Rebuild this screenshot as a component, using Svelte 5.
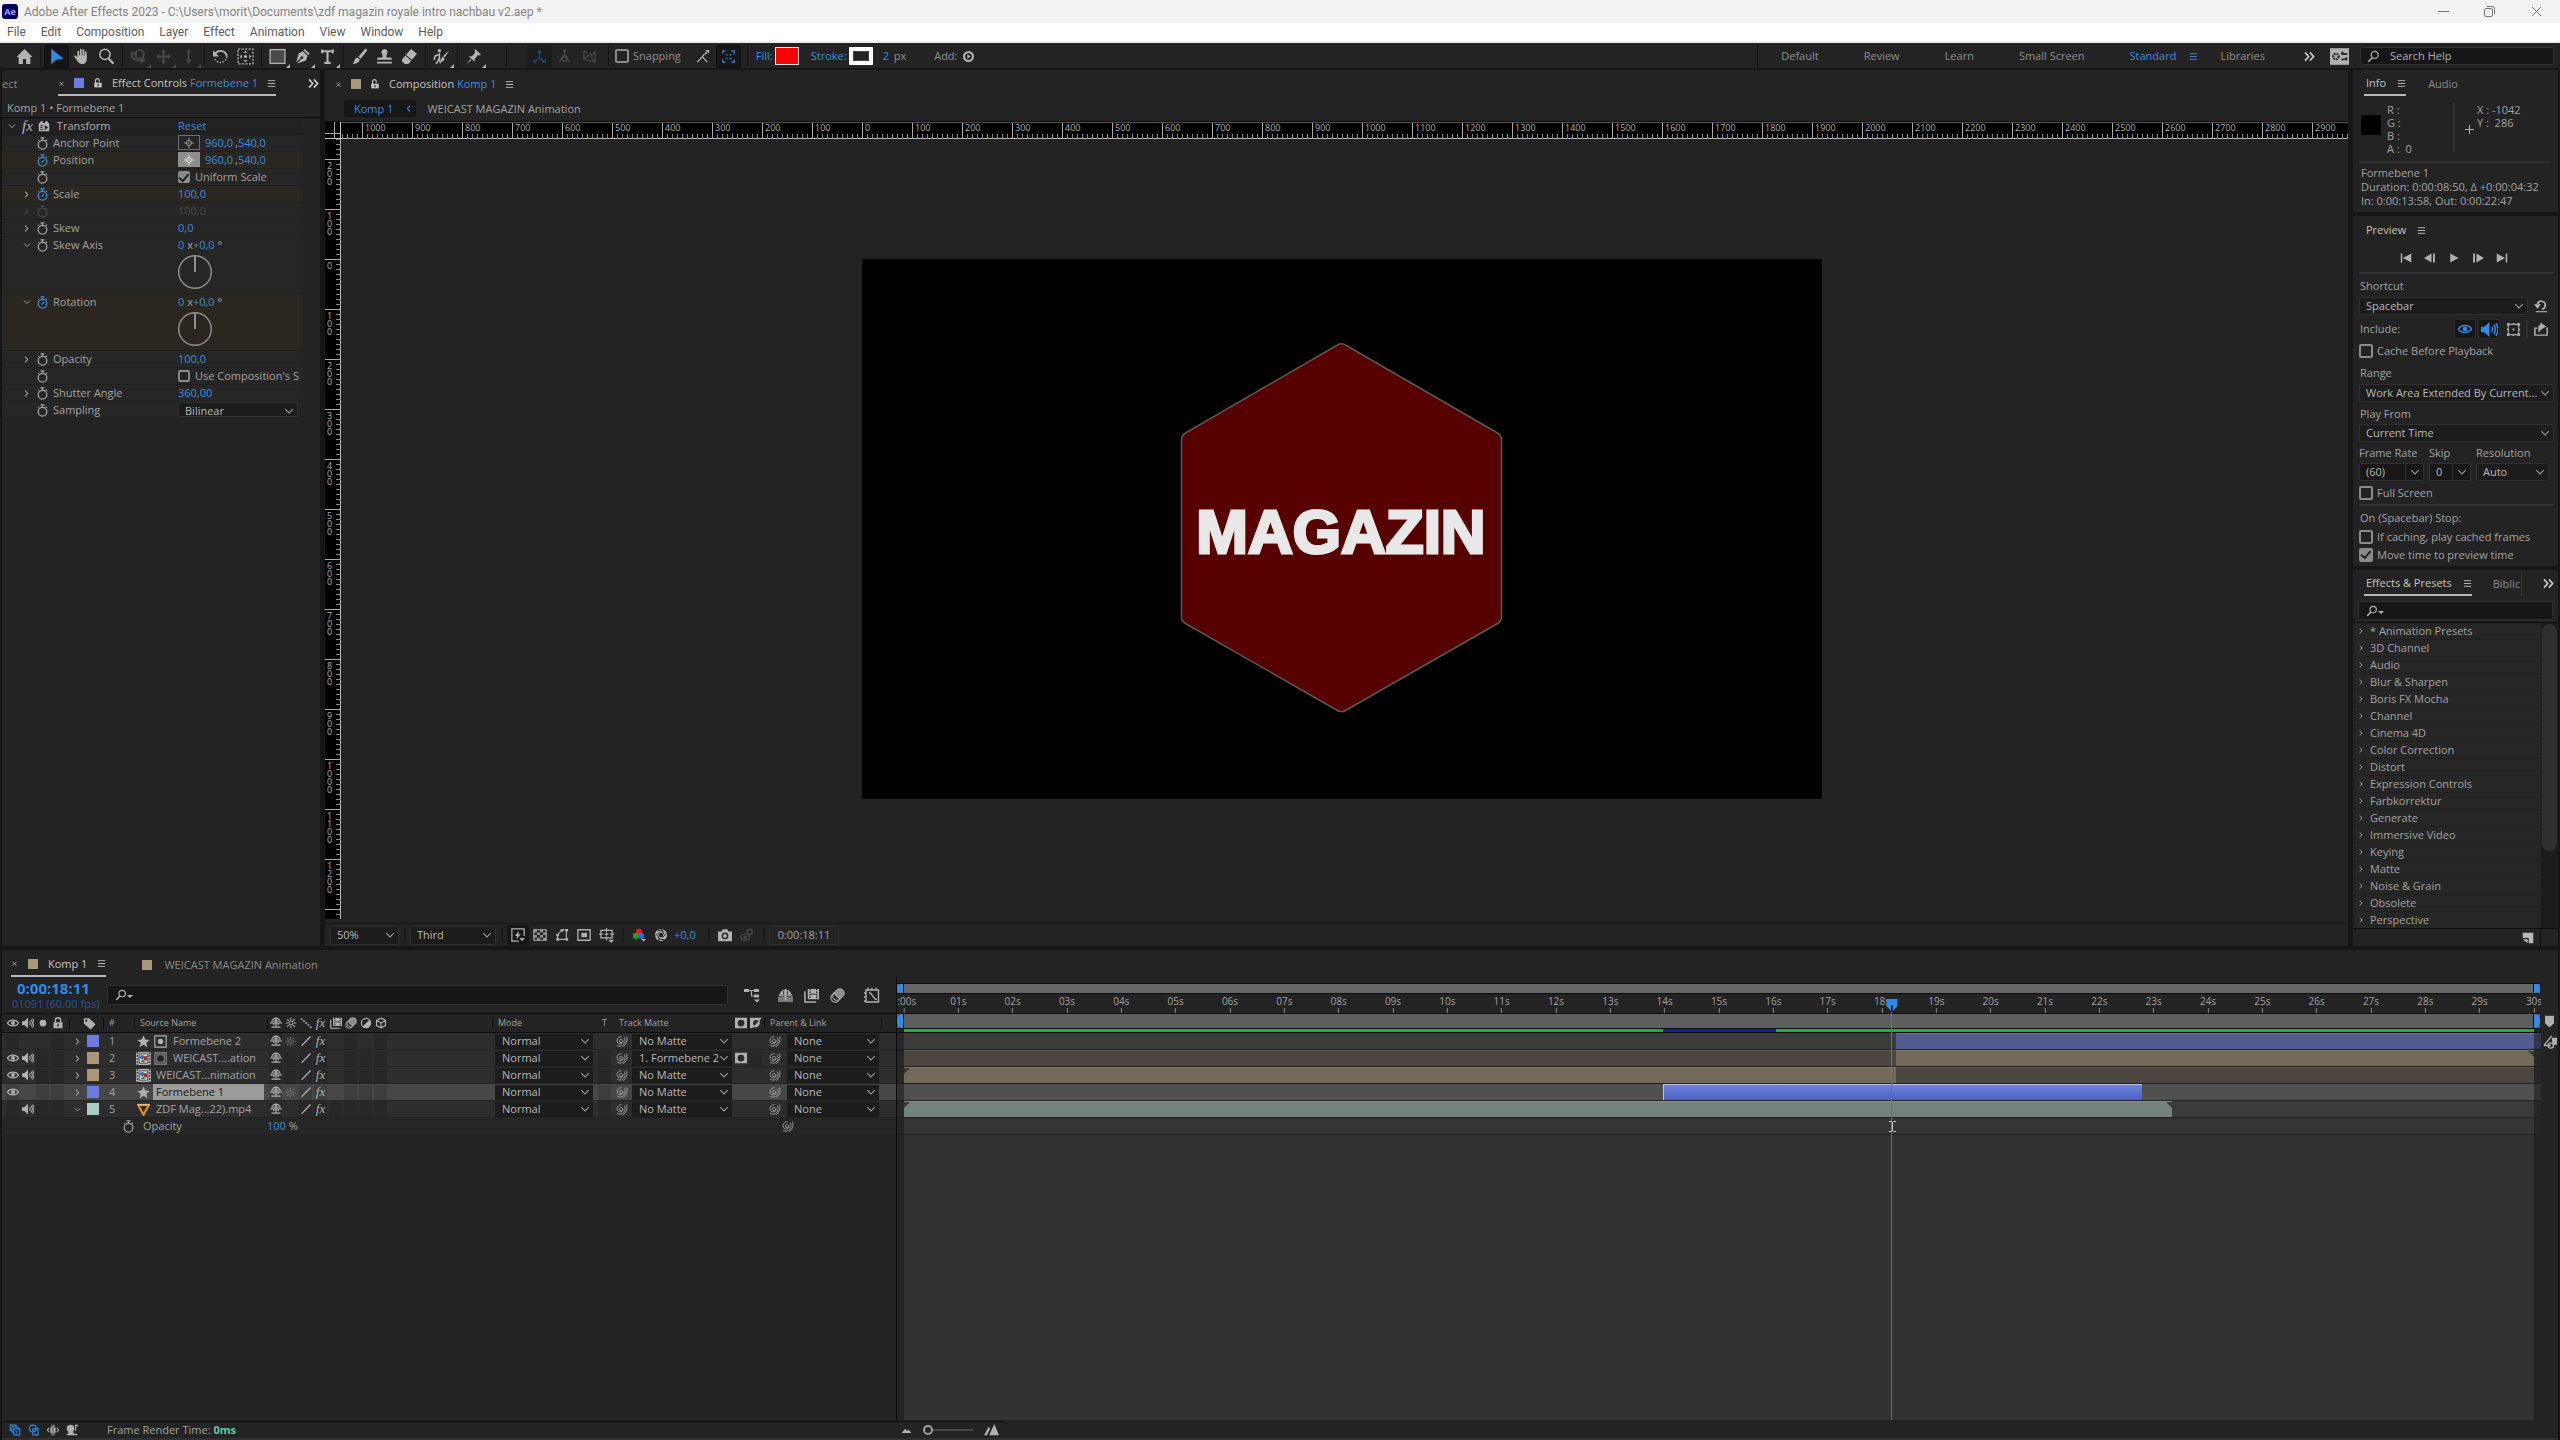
<script>
  const menus = ['File', 'Edit', 'Composition', 'Layer', 'Effect', 'Animation', 'View', 'Window', 'Help'];

  const toolGroups = [
    [{ icon: 'arrow', label: 'Selection', on: true }, { icon: 'hand', label: 'Hand' }, { icon: 'zoom', label: 'Zoom' }],
    [{ icon: 'orbit', label: 'Orbit', dim: true, more: true }, { icon: 'pan', label: 'Pan', dim: true, more: true }, { icon: 'dolly', label: 'Dolly', dim: true, more: true }],
    [{ icon: 'rotate', label: 'Rotate' }, { icon: 'behind', label: 'Pan Behind' }],
    [{ icon: 'rect', label: 'Rectangle', more: true }, { icon: 'pen', label: 'Pen', more: true }, { icon: 'type', label: 'Type', more: true }],
    [{ icon: 'brush', label: 'Brush' }, { icon: 'stamp', label: 'Clone Stamp' }, { icon: 'eraser', label: 'Eraser' }],
    [{ icon: 'roto', label: 'Roto Brush', more: true }],
    [{ icon: 'pin', label: 'Puppet Pin', more: true }]
  ];

  const workspaces = ['Default', 'Review', 'Learn', 'Small Screen', 'Standard', 'Libraries'];

  const props = [
    { name: 'Anchor Point', kind: 'point', value: ['960,0', '540,0'] },
    { name: 'Position', kind: 'point', value: ['960,0', '540,0'], key: true, picked: true },
    { name: '', kind: 'check', text: 'Uniform Scale', checked: true },
    { name: 'Scale', kind: 'num', value: '100,0', key: true, twirl: true },
    { name: '', kind: 'num', value: '100,0', dim: true, twirl: true },
    { name: 'Skew', kind: 'num', value: '0,0', twirl: true },
    { name: 'Skew Axis', kind: 'dial', open: true },
    { name: 'Rotation', kind: 'dial', open: true, key: true },
    { name: 'Opacity', kind: 'num', value: '100,0', twirl: true },
    { name: '', kind: 'check', text: "Use Composition's S", checked: false },
    { name: 'Shutter Angle', kind: 'num', value: '360,00', twirl: true },
    { name: 'Sampling', kind: 'select', value: 'Bilinear' }
  ];

  const effects = [
    '* Animation Presets', '3D Channel', 'Audio', 'Blur & Sharpen', 'Boris FX Mocha', 'Channel',
    'Cinema 4D', 'Color Correction', 'Distort', 'Expression Controls', 'Farbkorrektur', 'Generate',
    'Immersive Video', 'Keying', 'Matte', 'Noise & Grain', 'Obsolete', 'Perspective'
  ];

  // wells: indexes of the switch cells that show an empty well
  const layers = [
    { id: 1, name: 'Formebene 2', color: '#6b7ee0', icons: ['star', 'matteon'], eye: false, audio: false, solo: false, sun: true, matte: 'No Matte', wells: [5, 7], bars: [{ from: 18.25, to: 30.14, tone: 'violet' }] },
    { id: 2, name: 'WEICAST....ation', color: '#a89778', icons: ['comp', 'mattein'], eye: true, audio: true, solo: true, matte: '1. Formebene 2', invert: true, wells: [1, 5, 6, 7], bars: [{ from: 0, to: 18.25, tone: 'sanddim' }, { from: 18.25, to: 30, tone: 'sand cut-out' }] },
    { id: 3, name: 'WEICAST...nimation', color: '#a89778', icons: ['comp'], eye: true, audio: true, solo: true, matte: 'No Matte', wells: [1, 5, 6, 7], bars: [{ from: 0, to: 18.25, tone: 'sand cut-in' }, { from: 18.25, to: 30, tone: 'sanddim' }] },
    { id: 4, name: 'Formebene 1', color: '#6b7ee0', icons: ['star'], eye: true, audio: false, solo: true, sun: true, matte: 'No Matte', wells: [5, 6, 7], bars: [{ from: 13.97, to: 22.78, tone: 'picked' }] },
    { id: 5, name: 'ZDF Mag...22).mp4', color: '#a9cdc6', icons: ['movie'], eye: false, audio: true, solo: true, open: true, matte: 'No Matte', wells: [4, 5, 6, 7], bars: [{ from: 0, to: 23.33, tone: 'teal cut-in cut-out' }] }
  ];
  let selected = $state(4);

  const duration = 30;
  const now = 18 + 11 / 60;
  const pct = (s) => `${(s / duration) * 100}%`;
  const seconds = Array.from({ length: duration + 1 }, (_, s) => ({ s, label: s === 0 ? '0:00s' : `${String(s).padStart(2, '0')}s` }));

  // composition view: 50 % zoom, frame origin inside the viewer
  const origin = { x: 521, y: 120 };
  const hTicks = Array.from({ length: 40 }, (_, i) => (i - 10) * 100);
  const vTicks = Array.from({ length: 15 }, (_, i) => (i - 2) * 100);

  const icons = {
    home: '<path d="M8 1 0.5 8.4h2V15h4v-4.6h3V15h4V8.4h2z"/>',
    arrow: '<path d="M3 .5v15L7.5 11l7-1z"/>',
    hand: '<path d="M5 9V3.4M7.4 8V1.5M9.8 8V2M12 8.5V4" stroke="currentColor" stroke-width="1.7" stroke-linecap="round"/><path d="M4.1 7h8.800v3.5c0 2.5-1.3 4.5-4.3 4.5-2.5 0-3.7-1.3-4.6-3L1.200 8.200c-.4-1 .8-1.6 1.5-.8l1.4 1.700z"/>',
    zoom: '<g fill="none" stroke="currentColor"><circle cx="6.5" cy="6" r="4.8" stroke-width="1.4"/><path d="m10 9.800 4.600 5" stroke-width="2"/></g>',
    orbit: '<g fill="none" stroke="currentColor" stroke-width="1.8"><circle cx="9" cy="6" r="4"/><path d="M2 5c-2 5 4 8 11 6M1 4.500h4.500V8"/></g><path d="M10 8l5 3-5 4z"/>',
    pan: '<path d="M8 1 10.500 4H9v3h3V5.500L15 8l-3 2.500V9H9v3h1.500L8 15l-2.500-3H7V9H4v1.500L1 8l3-2.500V7h3V4H5.500z"/>',
    dolly: '<path d="M8 1l2 3H8.800v7H11l-3 4-3-4h2.200V4H6z"/>',
    rotate: '<path d="M3 5.500A6 6 0 0 1 14 8" fill="none" stroke="currentColor" stroke-width="1.8"/><path d="M1 2v6h5.500z"/><path d="M14 8a6 6 0 0 1-11.500 2" fill="none" stroke="currentColor" stroke-width="1.3" stroke-dasharray="1.3 1.5"/>',
    behind: '<rect x="1" y="1" width="14" height="14" fill="none" stroke="currentColor" stroke-width="1.2" stroke-dasharray="2 1.3"/><path d="M8 2.500l2 2H6zM8 13.500l2-2H6zM2.500 8l2-2v4zM13.500 8l-2-2v4z"/><circle cx="8" cy="8" r="1.5"/>',
    rect: '<rect x="1" y="1.5" width="14" height="13" fill="#4a4a4a" stroke="currentColor" stroke-width="1.2"/>',
    pen: '<path d="M10 1l5 4.500-1.500 1.200-4.700-4.500zM8.300 3l4.500 4.400-1.600 4.300L3 14.500l4-4.300a1.300 1.300 0 1 0-.8-.8L2 13.600 4.500 5z"/>',
    type: '<path d="M3 3h10M8 3v11M5 14h6M3 1.500V5M13 1.500V5" fill="none" stroke="currentColor" stroke-width="2"/>',
    brush: '<path d="M14.500 1c.8.8.5 1.500 0 2.200L9 10 7 8.200l6-7c.5-.6 1-.6 1.500-.2zM6.200 9l2 1.900c-.2 2.600-3 4.300-6.700 3.900 2-1 1.500-5.800 4.700-5.800z"/>',
    stamp: '<path d="M8 1a3 3 0 0 1 2.500 4.500C9.500 7 9.700 8.500 10 9h3.500c.8 0 1.500.6 1.500 2H1c0-1.400.7-2 1.500-2H6c.3-.5.5-2-.5-3.500A3 3 0 0 1 8 1zM1 13h14v1.500H1z"/>',
    eraser: '<path d="M9.500 1 15 5.500 7 15H3.500L1 12.500v-2z"/><path d="M4.500 7l6 5" stroke="#232323" stroke-width="1"/>',
    roto: '<circle cx="6" cy="2.5" r="1.6"/><path d="M6 5v5M6 6L2 7.500 1 11M6 9.500L3 15M6 9.500l1 5" fill="none" stroke="currentColor" stroke-width="1.5"/><path d="M15.500 2 11 9 9.500 7.500zM9 8l2 2c-.5 2-2 3-4 3 1-1 .5-3.500 2-5z"/>',
    pin: '<path d="M9.500 1l5.500 5-1.500 1-1-.3L9.300 10l-.2 3L3.500 8l3-.3 3-3.300L9 2zM5 10.500l1 1L1.500 15z"/>',
    axis: '<g fill="none" stroke="currentColor" stroke-width="1.3"><path d="M8 2v7.500L2 14M8 9.500l6 4.500M6 4l2-2.500L10 4M2 11v3h3M14 11v3h-3"/></g>',
    axisb: '<g fill="none" stroke="currentColor" stroke-width="1.3"><path d="M8 1v6.500L2 14M8 7.500l6 6.500M6.500 3 8 1l1.500 2"/><circle cx="8" cy="10" r="3"/></g>',
    axisc: '<path d="M2 2v9l12 3V3L9 8M2 2l4 2M14 14l-4-5M2 11l8-7" fill="none" stroke="currentColor" stroke-width="1.3"/>',
    snap: '<path d="M1.500 15 7 9l6 6M7 9l2.500-3" fill="none" stroke="currentColor" stroke-width="1.5"/><path d="M10.500 1H15v4.500zM9.500 5l2-2 1.500 1.500-2 2z"/>',
    snapbox: '<g fill="none" stroke="currentColor" stroke-width="1.5"><path d="M1 4.500V1h3.500M11.500 1H15v3.500M15 11.500V15h-3.500M4.500 15H1v-3.500"/><path d="M5 5l1.500 1.500M11 5 9.500 6.500M5 11l1.500-1.500M11 11 9.500 9.500"/></g>',
    addplay: '<circle cx="8" cy="8" r="5.5" fill="none" stroke="currentColor" stroke-width="2.6"/><path d="M6.500 5v6l4-3z"/>',
    chev: '<path d="M3 5.500 8 10.500l5-5" fill="none" stroke="currentColor" stroke-width="1.5"/>',
    chevr: '<path d="M5.500 3 10 8l-4.500 5" fill="none" stroke="currentColor" stroke-width="1.9"/>',
    dchev: '<path d="M2.500 3 7 8l-4.500 5M8.500 3 13 8l-4.500 5" fill="none" stroke="currentColor" stroke-width="2.2"/>',
    menu: '<path d="M1.500 3h13M1.500 8h13M1.500 13h13" stroke="currentColor" stroke-width="1.6"/>',
    x: '<path d="M3.500 4l9 9M12.500 4l-9 9" stroke="currentColor" stroke-width="1.7"/>',
    unlock: '<path d="M2 7.500h12V15H2z"/><path d="M4 9V4a3 3 0 0 1 6 0v2" fill="none" stroke="currentColor" stroke-width="1.8"/><path d="M7.200 9.500h1.800v3.500H7.200z" fill="#232323"/>',
    gearbox: '<path d="M0 1h16v14H0z"/><circle cx="5" cy="8" r="2.3" fill="none" stroke="#232323" stroke-width="1.8" stroke-dasharray="1.5 .7"/><path d="M9.500 6h5M11 4 9.500 6M9.500 10.500h5M13 8.800l1.500 1.700" stroke="#232323" stroke-width="1.4"/>',
    search: '<circle cx="9.5" cy="6" r="4.3" fill="none" stroke="currentColor" stroke-width="1.6"/><path d="M6.500 9.500 1.500 14.500" stroke="currentColor" stroke-width="2"/>',
    watch: '<g fill="none" stroke="currentColor" stroke-width="1.6"><circle cx="8" cy="9.5" r="5.3"/><path d="M5.500 1h5M8 1v3.500M12 4.800l1.500-1.500M3.700 4.500l-1-1"/></g>',
    watchon: '<g fill="none" stroke="currentColor" stroke-width="1.6"><circle cx="8" cy="9.5" r="5.3"/><path d="M5.500 1h5M8 1v3.500M12 4.800l1.500-1.500M3.700 4.500l-1-1M7 10.500l3-3"/></g>',
    fxbox: '<path d="M1 4h2V1.500h3.500V4h3V1.500H13V4h2v11H1z"/><path d="M3 7.500h4M3 10h3M3 12.500h4" stroke="#232323" stroke-width="1.2"/><path d="M9 6.500l4.500 3.500L9 13.500z" fill="#232323"/>',
    target: '<g fill="none" stroke="currentColor" stroke-width="1.3"><circle cx="8" cy="8" r="4"/><path d="M8 0v5M8 11v5M0 8h5M11 8h5"/></g><circle cx="8" cy="8" r="1.2"/>',
    first: '<path d="M1 2h2v12H1zM15 2v12L4 8z"/>',
    prev: '<path d="M10 2v12L0 8zM12 2h2.500v12H12z"/>',
    play: '<path d="M3 2l11 6-11 6z"/>',
    next: '<path d="M1.500 2H4v12H1.500zM6 2l10 6-10 6z"/>',
    last: '<path d="M1 2l11 6-11 6zM13 2h2v12h-2z"/>',
    reset: '<path d="M2 14.500h13" stroke="currentColor" stroke-width="1.3"/><path d="M4 6a4.500 4.500 0 1 1 5 5.500" fill="none" stroke="currentColor" stroke-width="2"/><path d="M0 6h8l-4 5z"/>',
    eye: '<path d="M.5 8C3.500 2.800 12.500 2.800 15.500 8c-3 5.200-12 5.200-15 0z" fill="none" stroke="currentColor" stroke-width="1.7"/><circle cx="8" cy="8" r="2.7"/>',
    speaker: '<path d="M0 5.500h3L8 1v14l-5-4.500H0z"/><g fill="none" stroke="currentColor" stroke-width="1.4"><path d="M10 5.500c1 1.500 1 3.500 0 5M12 3.500c2 2.500 2 6.500 0 9M14 2c2.300 3.500 2.300 8.500 0 12"/></g>',
    box: '<path d="M2.500 2.500h11v11h-11z" fill="none" stroke="currentColor" stroke-width="1.2"/><path d="M1 1h3v3H1zM12 1h3v3h-3zM1 12h3v3H1zM12 12h3v3h-3zM7 7h2v2H7zM7 1h2v2H7zM7 13h2v2H7zM1 7h2v2H1zM13 7h2v2h-2z"/>',
    share: '<path d="M4 7H1v8h14V7h-1" fill="none" stroke="currentColor" stroke-width="1.7"/><path d="M5 11V4h2V.5L14 5 7 9.500V11z"/>',
    note: '<path d="M1 1h14v14H9V8H1z"/><path d="M1 9.500l6.500 5.500V9.500z"/>',
    fast: '<path d="M15 9V1H1v14h8" fill="none" stroke="currentColor" stroke-width="1.4"/><path d="M9 3 4.500 9H7l-1 4 5-6H8.500zM9.500 11.500h6.500L12.700 15z"/>',
    grid: '<path d="M1 2h14v12H1z" fill="none" stroke="currentColor" stroke-width="1.3"/><path d="M1 2h3.500v3H1zM8 2h3.500v3H8zM4.500 5H8v3H4.500zM11.500 5H15v3h-3.500zM1 8h3.500v3H1zM8 8h3.500v3H8zM4.500 11H8v3H4.500zM11.500 11H15v3h-3.500z" opacity=".75"/>',
    mask: '<path d="M3 13V8l5-6h5v11z" fill="none" stroke="currentColor" stroke-width="1.3"/><path d="M1.500 11.500h3v3h-3zM12 11.500h3v3h-3zM12 1h3v3h-3zM6.500 1h3v3h-3zM1.500 6.500h3v3h-3z"/>',
    roi: '<path d="M1 2h14v12H1z" fill="none" stroke="currentColor" stroke-width="1.5"/><path d="M5 5.500h6.500v5H5z"/>',
    guides: '<path d="M2 2.500h12v8H2zM0 6.500h4M12 6.500h4M8 0v4M8 9v4M6 6.500h4M8 5v3" fill="none" stroke="currentColor" stroke-width="1.3"/><path d="M10 12.500h6l-3 3.500z"/>',
    rgb: '<circle cx="8" cy="4" r="3.5" fill="#e01818"/><circle cx="4.5" cy="9" r="3.5" fill="#1ea01e"/><circle cx="10.5" cy="9" r="3.5" fill="#3b62e0"/><path d="M10.500 12.500h5.500l-2.700 3z"/>',
    shutter: '<circle cx="8" cy="8" r="7"/><g stroke="#232323" stroke-width="1.1"><path d="M8 1l3.500 6M14.500 6l-5 5M12.500 13.500l-7-1M6 15 4.500 8.500M1.500 9l5-4.500M4 2.500l7 1"/></g><circle cx="8" cy="8" r="2.6" fill="#232323"/>',
    camera: '<path d="M0 4h4l1.500-2.500h5L12 4h4v11H0z"/><circle cx="8" cy="9" r="3" fill="none" stroke="#232323" stroke-width="1.5"/>',
    ghost: '<g fill="none" stroke="currentColor" stroke-width="1.7"><ellipse cx="6" cy="10.5" rx="5" ry="3.5"/><circle cx="11" cy="4.5" r="3"/></g><circle cx="6" cy="10.5" r="2"/>',
    dot: '<circle cx="8" cy="8" r="4.5"/>',
    lock: '<path d="M2 7h12v8H2z"/><path d="M4.500 7V4.500a3.500 3.500 0 0 1 7 0V7" fill="none" stroke="currentColor" stroke-width="1.8"/><path d="M7.200 9h1.600v4H7.200z" fill="#232323"/>',
    tag: '<path d="M1 1.500h6.500L15.500 9l-6 6.500L1 8z"/><circle cx="4" cy="4.5" r="1.3" fill="#232323"/>',
    shy: '<path d="M2.500 7a5.500 5.500 0 0 1 11 0M8 1.500V13M0 8h16M2 13.500h12M5 8v3M11 8v3" fill="none" stroke="currentColor" stroke-width="1.6"/><path d="M4 7a4 4 0 0 1 8 0z" opacity=".6"/>',
    sun: '<circle cx="8" cy="8" r="2.6" fill="none" stroke="currentColor" stroke-width="1.4"/><path d="M8 1v3M8 12v3M1 8h3M12 8h3M3 3l2 2M11 11l2 2M13 3l-2 2M3 13l2-2" stroke="currentColor" stroke-width="1.5"/>',
    diag: '<path d="M1 1.500h2.500v2H1zM4 4.500h2.500v2H4zM7 7h2.500v2H7zM10 9.500h2.500v2H10zM13 12.500h2.500v2H13z"/>',
    slash: '<path d="M2 14.500 14 2" stroke="currentColor" stroke-width="1.8"/>',
    film: '<path d="M4 1h12v11H4z"/><path d="M1 3.500V15h12" fill="none" stroke="currentColor" stroke-width="1.6"/><path d="M6.500 1v11M13.500 1v11" stroke="#232323" stroke-width="1.4" stroke-dasharray="1.5 1.2"/><path d="M7.500 6.500h5" stroke="#232323"/>',
    blur: '<g fill="none" stroke="currentColor" stroke-width="1.2"><circle cx="5.5" cy="10.5" r="4.6"/><circle cx="7.5" cy="8.5" r="4.6"/></g><circle cx="10.3" cy="5.7" r="4.9" fill="#8c8c8c" stroke="currentColor"/>',
    adjust: '<circle cx="8" cy="8" r="6.2" fill="none" stroke="currentColor" stroke-width="1.5"/><path d="M12.500 3.500A6.300 6.300 0 0 1 3.500 12.500z"/>',
    cube: '<path d="M8 1.500 14 4.500v7L8 14.500 2 11.500v-7zM2 4.500 8 8l6-3.500M8 8v6.500" fill="none" stroke="currentColor" stroke-width="1.5"/>',
    star: '<path d="M8 .5l2.200 5 5.500.5-4.200 3.600 1.300 5.400L8 12l-4.800 3 1.300-5.400L.3 6l5.500-.5z"/>',
    matteon: '<path d="M1 1h14v14H1z" fill="none" stroke="currentColor" stroke-width="1.4"/><circle cx="8" cy="8" r="3.3"/>',
    mattein: '<path d="M1 1h14v14H1z" fill="none" stroke="#8c8c8c" stroke-width="1.4"/><path d="M2.500 2.500h11v11h-11z" fill="#6a6a6a"/><circle cx="8" cy="8" r="4" fill="#232323"/>',
    comp: '<path d="M0 1h16v14H0z"/><path d="M1.500 1v14M14.500 1v14" stroke="#333" stroke-width="1.5" stroke-dasharray="1.8 1.5"/><path d="M3.500 3h9v10h-9z" fill="#d4d4d4" stroke="#333" stroke-width=".8"/><path d="M8.500 5.500h3.500v4.500H8.500z" fill="#b3282d"/><circle cx="6.5" cy="6.5" r="2.3" fill="#2f6fb0"/><path d="M7.500 8.500 10 12H5z" fill="#2d8a4a"/>',
    movie: '<path d="M1.500 2.500h13L8 14.500z" fill="none" stroke="#e08a2c" stroke-width="2.6"/><path d="M1 2h14" stroke="#e6c9a0" stroke-width="2.2" stroke-dasharray="2 1"/>',
    mattesq: '<path d="M0 1h16v14H0z"/><circle cx="8" cy="8" r="4.5" fill="#2b2b2b"/>',
    invsq: '<path d="M0 1h16L3 15H0z"/><circle cx="8" cy="8" r="4" fill="#2b2b2b"/><path d="M13 4 4 13.500l3 .5c4 0 6-3 6-6z"/>',
    whip: '<g fill="none" stroke="currentColor" stroke-width="1.1"><path d="M9.500 7.500a2 2 0 1 1-2-2c3 0 3.300 4.500.2 5.300-3 .7-5.200-1.300-5.200-3.800 0-3 2.500-5 5.500-5"/><path d="M11.500 3c2 4.500.5 9.500-4 10.500-2 .4-3.500 0-5-1.200M14.300 2c1.200 5-.3 10-4.300 12.300"/></g>',
    flow: '<path d="M0 2h5v3H0zM10 2h5v3h-5zM10 7.500h5v3h-5z"/><path d="M4 3.500h7M7.500 3.500V9H11" fill="none" stroke="currentColor" stroke-width="1.2"/><path d="M10 12.500h6L13 15.500z"/>',
    shyb: '<path d="M0 9h16v6H0z" fill="#7a7a7a"/><path d="M2 7a6 5.500 0 0 1 12 0z"/><path d="M8 1v12M1 7.500h14" stroke="currentColor" stroke-width="1.6"/><path d="M6 3v4M10 3v4" stroke="#232323"/>',
    graph: '<path d="M2 3h12.500v12H2z" fill="none" stroke="currentColor" stroke-width="1.4"/><path d="M5 5.500c3 0 4 7 8 7M4 3V.5M8 3V.5M12 3V.5M2 6H0M2 10H0M2 14H0" fill="none" stroke="currentColor" stroke-width="1.3"/>',
    foota: '<g fill="none" stroke="currentColor" stroke-width="1.4"><path d="M1.500 1.500h8v7h-8z"/><path d="M4 4h8v7H4z" fill="#232323"/><path d="M6.500 6.500h8v8h-8z" fill="#232323"/></g><path d="M9 10.500h3M10.500 9v3" stroke="currentColor"/>',
    footb: '<g fill="none" stroke="currentColor" stroke-width="1.5"><circle cx="6.5" cy="6" r="4.5"/><path d="M6.500 6.500h7v8h-7z"/></g>',
    footc: '<path d="M6 1h1.500v14H6v-3.500H4.500V4.500H6zM8.500 1H10v3.500h1.500v7H10V15H8.500z"/><path d="M3 5 .5 8 3 11M13 5l2.500 3-2.500 3" fill="none" stroke="currentColor" stroke-width="1.5"/>',
    footd: '<circle cx="6" cy="6" r="5"/><path d="M3 10h7v3H3zM1 13h14v2H1zM12 1h4v2h-2.500v6H12z"/>',
    peak: '<path d="M1 13 6 7l3 3 2-2 4 5z"/>',
    peaks: '<path d="M5.500 14 11 2l5 12zM0 14 5 5l1.500 2.500L3 14z"/>',
    marker: '<path d="M2.500 1h11v9L8 15.500 2.500 10z"/>',
    comment: '<path d="M10 3h6v8h-5z"/><path d="M1 12 10 1M1 12h8" stroke="currentColor" stroke-width="1.5"/><circle cx="9" cy="12" r="3" fill="none" stroke="currentColor" stroke-width="1.6"/>'
  };
  const avHead = ['eye', 'speaker', 'dot', 'lock'];
  const switchHead = ['shy', 'sun', 'diag', 'fx', 'film', 'blur', 'adjust', 'cube'];
</script>

{#snippet icon(name, size = 12)}
  <svg class="icon" viewBox="0 0 16 16" width={size} height={size} fill="currentColor" aria-hidden="true">{@html icons[name]}</svg>
{/snippet}

{#snippet dropdown(label, value, id = undefined)}
  <span class="dropdown">
    <select {id} aria-label={label}><option>{value}</option></select>
    {@render icon('chev', 12)}
  </span>
{/snippet}

<div class="app">
  <header class="titlebar">
    <span class="logo">Ae</span>
    <span class="doc">Adobe After Effects 2023 - C:\Users\morit\Documents\zdf magazin royale intro nachbau v2.aep *</span>
    <div class="winbtns">
      <button aria-label="Minimize"><svg width="11" height="11" viewBox="0 0 11 11" fill="none" stroke="#777"><path d="M0 5.500h11" /></svg></button>
      <button aria-label="Restore"><svg width="11" height="11" viewBox="0 0 11 11" fill="none" stroke="#777"><rect x="0.5" y="2.5" width="8" height="8" rx="1.5" /><path d="M3 .5h5.500a2 2 0 0 1 2 2V8" /></svg></button>
      <button aria-label="Close"><svg width="11" height="11" viewBox="0 0 11 11" fill="none" stroke="#777"><path d="M1 1l9 9M10 1l-9 9" /></svg></button>
    </div>
  </header>

  <nav class="menubar">
    {#each menus as m}<button>{m}</button>{/each}
  </nav>

  <div class="toolbar">
    <button class="tool home" aria-label="Home">{@render icon('home', 17)}</button>
    {#each toolGroups as group}
      <span class="sep"></span>
      {#each group as t}
        <button class="tool" class:on={t.on} class:dim={t.dim} class:more={t.more} aria-label={t.label}>{@render icon(t.icon, 17)}</button>
      {/each}
    {/each}
    <span class="sep wide"></span>
    <button class="tool dimblue" aria-label="Local axis">{@render icon('axis', 15)}</button>
    <button class="tool dim" aria-label="World axis">{@render icon('axisb', 15)}</button>
    <button class="tool dim" aria-label="View axis">{@render icon('axisc', 15)}</button>
    <span class="sep mid"></span>
    <label class="check snap"><input type="checkbox" /> Snapping</label>
    <button class="tool" aria-label="Snap edges">{@render icon('snap', 14)}</button>
    <button class="tool on" aria-label="Snap features">{@render icon('snapbox', 13)}</button>
    <span class="sep mid"></span>
    <span class="blue filllabel">Fill:</span><button class="swatch fill" aria-label="Fill color"></button>
    <span class="blue">Stroke:</span><button class="swatch ring" aria-label="Stroke color"></button>
    <span class="blue width">2</span><span class="px">px</span>
    <span class="add">Add:</span><button class="plain" aria-label="Add">{@render icon('addplay', 13)}</button>

    <div class="workspaces">
      {#each workspaces as w}
        <button class:current={w === 'Standard'}>{w}{#if w === 'Standard'}{@render icon('menu', 9)}{/if}</button>
      {/each}
      <button class="plain more-ws" aria-label="More workspaces">{@render icon('dchev', 13)}</button>
    </div>
    <button class="plain gear" aria-label="Sync settings">{@render icon('gearbox', 19)}</button>
    <label class="helpsearch">{@render icon('search', 13)}<input placeholder="Search Help" aria-label="Search Help" /></label>
  </div>

  <main class="workspace">
    <section class="panel fxcontrols">
      <div class="tabs">
        <span class="cut">ect</span>
        <div class="tab active">
          {@render icon('x', 7)}<i class="chip blue-chip"></i>{@render icon('unlock', 10)}
          <span>Effect Controls <b>Formebene 1</b></span>{@render icon('menu', 9)}
        </div>
        <button class="plain overflow" aria-label="More tabs">{@render icon('dchev', 13)}</button>
      </div>
      <div class="path">Komp 1 • Formebene 1</div>
      <div class="proplist">
        <div class="prop head">
          <span class="plabel">{@render icon('chev', 10)}<em>fx</em>{@render icon('fxbox', 12)}<span>Transform</span></span>
          <a href="#reset">Reset</a>
        </div>
        {#each props as p}
          <div class="prop" class:keyed={p.key} class:tall={p.kind === 'dial'} class:dimmed={p.dim}>
            <span class="plabel">
              <span class="twirl">{#if p.twirl}{@render icon('chevr', 9)}{:else if p.open}{@render icon('chev', 10)}{/if}</span>
              <span class="watch" class:live={p.key}>{@render icon(p.key ? 'watchon' : 'watch', 13)}</span>
              <span>{p.name}</span>
            </span>
            <span class="pvalue">
              {#if p.kind === 'point'}
                <button class="target" class:picked={p.picked} aria-label="Pick {p.name}">{@render icon('target', 10)}</button>
                <span class="blue">{p.value[0]}</span><span class="comma">,</span><span class="blue">{p.value[1]}</span>
              {:else if p.kind === 'check'}
                <label class="check small"><input type="checkbox" checked={p.checked} /> {p.text}</label>
              {:else if p.kind === 'num'}
                <span class="blue">{p.value}</span>
              {:else if p.kind === 'dial'}
                <span class="angle"><span class="blue">0</span> x<span class="blue">+0,0</span> °</span>
                <svg class="dial" width="34" height="36" viewBox="0 0 34 36"><circle cx="17" cy="18" r="16.3" fill="none" stroke="#909090" stroke-width="1.4" /><path d="M17 2v16" stroke="#909090" stroke-width="2" /></svg>
              {:else}
                {@render dropdown(p.name, p.value)}
              {/if}
            </span>
          </div>
        {/each}
      </div>
    </section>

    <section class="panel comp">
      <div class="tabs">
        <div class="tab comptab">
          {@render icon('x', 7)}<i class="chip sand-chip"></i>{@render icon('unlock', 10)}
          <span>Composition <b>Komp 1</b></span>{@render icon('menu', 9)}
        </div>
      </div>
      <div class="crumbs">
        <button class="crumb">Komp 1 {@render icon('chevr', 9)}</button>
        <span>WEICAST MAGAZIN Animation</span>
      </div>
      <div class="viewer">
        <div class="corner"></div>
        <div class="hruler" style="background-position-x: {origin.x % 50}px, {origin.x % 5}px, 0">
          {#each hTicks as t}<span style="left: {origin.x + t / 2 + 3}px">{Math.abs(t)}</span>{/each}
        </div>
        <div class="vruler" style="background-position-y: {origin.y % 50}px, {origin.y % 5}px, 0">
          {#each vTicks as t}<span style="top: {origin.y + t / 2 + 1}px">{Math.abs(t)}</span>{/each}
        </div>
        <div class="stage">
          <svg class="frame" style="left: {origin.x}px; top: {origin.y}px" viewBox="0 0 960 540" width="960" height="540">
            <rect width="960" height="540" fill="#000" />
            <path d="M475.500 86q4-2.500 8 0L635.500 174q4 2.500 4 6.500V358q0 4-4 6.500L483.500 451.500q-4 2.500-8 0L323.500 364.500q-4-2.500-4-6.500V180.500q0-4 4-6.500z" fill="#560000" stroke="#5c5654" stroke-width="1.5" />
            <text x="479" y="294" text-anchor="middle" class="magazin">MAGAZIN</text>
          </svg>
        </div>
      </div>
      <div class="viewbar">
        <span class="zoomsel">{@render dropdown('Magnification', '50%')}</span><span class="vsep"></span>
        <span class="ressel">{@render dropdown('Resolution', 'Third')}</span><span class="vsep"></span>
        <button class="vb on" aria-label="Fast previews">{@render icon('fast', 14)}</button>
        <button class="vb" aria-label="Transparency grid">{@render icon('grid', 14)}</button>
        <button class="vb" aria-label="Mask visibility">{@render icon('mask', 14)}</button>
        <button class="vb" aria-label="Region of interest">{@render icon('roi', 14)}</button>
        <button class="vb" aria-label="Guides">{@render icon('guides', 15)}</button><span class="vsep"></span>
        <button class="vb" aria-label="Channels">{@render icon('rgb', 14)}</button>
        <button class="vb" aria-label="Reset exposure">{@render icon('shutter', 14)}</button>
        <span class="blue expo">+0,0</span><span class="vsep"></span>
        <button class="vb" aria-label="Snapshot">{@render icon('camera', 14)}</button>
        <button class="vb off" aria-label="Show snapshot">{@render icon('ghost', 14)}</button><span class="vsep"></span>
        <button class="timebox">0:00:18:11</button>
      </div>
    </section>

    <aside class="side">
      <section class="panel info">
        <div class="tabs">
          <div class="tab active"><span>Info</span>{@render icon('menu', 9)}</div>
          <button class="tabbtn">Audio</button>
        </div>
        <div class="readout">
          <i class="black"></i>
          <div class="rgba"><span>R :</span><span>G :</span><span>B :</span><span>A :&nbsp; 0</span></div>
          <div class="xy"><span>X : -1042</span><span>Y : &nbsp;286</span>
            <svg class="cross" width="9" height="9" viewBox="0 0 9 9"><path d="M4.500 0v9M0 4.500h9" stroke="#b0b0b0" /></svg>
          </div>
        </div>
        <p>Formebene 1<br />Duration: 0:00:08:50, Δ +0:00:04:32<br />In: 0:00:13:58, Out: 0:00:22:47</p>
      </section>

      <section class="panel preview">
        <div class="tabs"><div class="tab"><span>Preview</span>{@render icon('menu', 9)}</div></div>
        <div class="transport">
          {#each ['first', 'prev', 'play', 'next', 'last'] as b}<button class="plain" aria-label={b}>{@render icon(b, 12)}</button>{/each}
        </div>
        <label class="cap" for="shortcut">Shortcut</label>
        <div class="line">{@render dropdown('Shortcut', 'Spacebar', 'shortcut')}<button class="plain ico" aria-label="Reset">{@render icon('reset', 14)}</button></div>
        <div class="line include">
          <span>Include:</span>
          <button class="tg on" aria-label="Video">{@render icon('eye', 14)}</button>
          <button class="tg on" aria-label="Audio">{@render icon('speaker', 17)}</button>
          <button class="tg" aria-label="Overlays">{@render icon('box', 15)}</button>
          <span class="isep"></span>
          <button class="plain ico" aria-label="Loop">{@render icon('share', 14)}</button>
        </div>
        <label class="check pad"><input type="checkbox" /> Cache Before Playback</label>
        <label class="cap" for="range">Range</label>
        <div class="line">{@render dropdown('Range', 'Work Area Extended By Current...', 'range')}</div>
        <label class="cap" for="from">Play From</label>
        <div class="line">{@render dropdown('Play From', 'Current Time', 'from')}</div>
        <div class="trio">
          <label for="rate">Frame Rate</label><label for="skip">Skip</label><label for="res">Resolution</label>
          <span class="split">{@render dropdown('Frame Rate', '(60)', 'rate')}</span>
          <span class="split">{@render dropdown('Skip', '0', 'skip')}</span>
          <span>{@render dropdown('Resolution', 'Auto', 'res')}</span>
        </div>
        <label class="check pad"><input type="checkbox" /> Full Screen</label>
        <div class="stop">
          <div class="cap">On (Spacebar) Stop:</div>
          <label class="check"><input type="checkbox" /> If caching, play cached frames</label>
          <label class="check"><input type="checkbox" checked /> Move time to preview time</label>
        </div>
      </section>

      <section class="panel effects">
        <div class="tabs">
          <div class="tab active"><span>Effects &amp; Presets</span>{@render icon('menu', 9)}</div>
          <button class="tabbtn clipped">Biblic</button>
          <button class="plain overflow" aria-label="More tabs">{@render icon('dchev', 13)}</button>
        </div>
        <label class="searchbox">{@render icon('search', 12)}<i class="caret"></i><input aria-label="Search effects" /></label>
        <div class="fxwrap">
          <ul>
            {#each effects as e}<li>{@render icon('chevr', 8)}{e}</li>{/each}
          </ul>
          <div class="scroll"><i></i></div>
        </div>
        <div class="fxfoot">{@render icon('note', 12)}</div>
      </section>
    </aside>
  </main>

  <section class="panel timeline">
    <div class="tabs">
      <div class="tab active tl">{@render icon('x', 7)}<i class="chip sand-chip"></i><span>Komp 1</span>{@render icon('menu', 9)}</div>
      <button class="tabbtn other"><i class="chip sand-chip"></i>WEICAST MAGAZIN Animation</button>
    </div>
    <div class="tlbody">
      <div class="outline">
        <div class="tlhead">
          <div class="clock"><strong>0:00:18:11</strong><small>01091 (60.00 fps)</small></div>
          <label class="searchbox">{@render icon('search', 12)}<i class="caret"></i><input aria-label="Search layers" /></label>
          <div class="tlbtns">
            <button class="plain flow" aria-label="Mini-flowchart">{@render icon('flow', 16)}</button>
            <button class="plain" aria-label="Hide shy layers">{@render icon('shyb', 15)}</button>
            <button class="plain" aria-label="Frame blending">{@render icon('film', 15)}</button>
            <button class="plain" aria-label="Motion blur">{@render icon('blur', 15)}</button>
            <button class="plain graph" aria-label="Graph editor">{@render icon('graph', 16)}</button>
          </div>
        </div>
        <table>
          <colgroup>
            <col class="c-av" /><col class="c-label" /><col class="c-num" /><col class="c-name" /><col class="c-sw" /><col class="c-gap" />
            <col class="c-mode" /><col class="c-t" /><col class="c-matte" /><col class="c-inv" /><col class="c-parent" /><col />
          </colgroup>
          <thead>
            <tr>
              <th><div class="cells av">{#each avHead as h}<span>{@render icon(h, 12)}</span>{/each}</div></th>
              <th class="bar"><div class="tagcell">{@render icon('tag', 13)}</div></th>
              <th class="bar num">#</th>
              <th class="bar pad-s">Source Name</th>
              <th class="bar"><div class="cells sw">{#each switchHead as h}<span>{#if h === 'fx'}<em>fx</em>{:else}{@render icon(h, 12)}{/if}</span>{/each}</div></th>
              <th></th>
              <th class="bar pad-s">Mode</th>
              <th class="mid">T</th>
              <th class="pad-s">Track Matte</th>
              <th><div class="cells inv"><span>{@render icon('mattesq', 12)}</span><span>{@render icon('invsq', 12)}</span></div></th>
              <th class="bar pad-s">Parent &amp; Link</th>
              <th class="bar"></th>
            </tr>
          </thead>
          <tbody>
            {#each layers as l}
              <tr class:sel={selected === l.id} onclick={() => (selected = l.id)}>
                <td>
                  <div class="cells av">
                    <span class="well" class:clear={l.eye}>{#if l.eye}{@render icon('eye', 12)}{/if}</span>
                    <span>{#if l.audio}{@render icon('speaker', 12)}{/if}</span>
                    <span class:well={l.solo}></span>
                    <span class="well"></span>
                  </div>
                </td>
                <td><div class="labelcell">{@render icon(l.open ? 'chev' : 'chevr', 9)}<i style="background: {l.color}"></i></div></td>
                <td class="num">{l.id}</td>
                <td>
                  <div class="namecell">
                    {#each l.icons as ic}<span class="nicon">{@render icon(ic, ic === 'comp' ? 15 : 13)}</span>{/each}
                    <span class="lname">{l.name}</span>
                  </div>
                </td>
                <td>
                  <div class="cells sw">
                    <span class="well">{@render icon('shy', 12)}</span>
                    <span class:well={l.wells.includes(1)} class="faint">{#if l.sun}{@render icon('sun', 11)}{/if}</span>
                    <span class="well">{@render icon('slash', 12)}</span>
                    <span class="well"><em>fx</em></span>
                    <span class:well={l.wells.includes(4)}></span>
                    <span class:well={l.wells.includes(5)}></span>
                    <span class:well={l.wells.includes(6)}></span>
                    <span class:well={l.wells.includes(7)}></span>
                  </div>
                </td>
                <td></td>
                <td><div class="selcell">{@render dropdown('Mode', 'Normal')}</div></td>
                <td><div class="cells"><span class:well={l.id > 1}></span></div></td>
                <td><div class="selcell whip">{@render icon('whip', 13)}{@render dropdown('Track Matte', l.matte)}</div></td>
                <td><div class="cells inv">{#if l.invert}<span>{@render icon('mattesq', 12)}</span><span class="well"></span>{/if}</div></td>
                <td><div class="selcell whip par">{@render icon('whip', 13)}{@render dropdown('Parent', 'None')}</div></td>
                <td></td>
              </tr>
            {/each}
            <tr class="sub">
              <td></td><td></td><td></td>
              <td class="subname"><div>{@render icon('watch', 13)}<span>Opacity</span></div></td>
              <td colspan="2"><span class="blue">100</span> %</td>
              <td></td><td></td><td></td><td></td>
              <td><div class="subwhip">{@render icon('whip', 13)}</div></td>
              <td></td>
            </tr>
          </tbody>
        </table>
      </div>

      <div class="tracks">
        <div class="navigator"><i></i><b></b></div>
        <div class="timeruler">
          <div class="scale">
            {#each seconds as t}<span style="left: {pct(t.s)}">{t.label}</span>{/each}
          </div>
        </div>
        <div class="workarea"><i></i><b></b></div>
        <div class="cache"><div class="scale"><i style="left: {pct(13.97)}; width: {pct(2.08)}"></i></div></div>
        <div class="lanes">
          {#each layers as l}
            <div class="lane" class:sel={selected === l.id}>
              <div class="scale">
                {#each l.bars as b}<div class="clip {b.tone}" style="left: {pct(b.from)}; width: {pct(b.to - b.from)}"></div>{/each}
              </div>
            </div>
          {/each}
          <div class="lane sublane"></div>
        </div>
        <div class="playhead"><div class="scale">
          <div class="cti" style="left: {pct(now)}">
            <svg width="12" height="14" viewBox="0 0 12 14"><path d="M.5 1h11v7L6 14 .5 8z" fill="#2f8ae8" /><path d="M6 7v7" stroke="#14304f" stroke-width="2" /></svg>
            <svg class="ibeam" width="7" height="11" viewBox="0 0 7 11"><path d="M0 .5h2.500l1 1 1-1H7M0 10.500h2.500l1-1 1 1H7M3.500 1v9" fill="none" stroke="#d0d0d0" /></svg>
          </div>
        </div></div>
      </div>

      <div class="strip">
        {@render icon('marker', 13)}
        {@render icon('comment', 14)}
      </div>
    </div>
    <footer>
      <button class="plain lit" aria-label="Layer switches">{@render icon('foota', 12)}</button>
      <button class="plain lit" aria-label="Transfer controls">{@render icon('footb', 12)}</button>
      <button class="plain" aria-label="In and out">{@render icon('footc', 12)}</button>
      <button class="plain" aria-label="Render time">{@render icon('footd', 12)}</button>
      <span class="render">Frame Render Time: <b>0ms</b></span>
      <div class="zoomer">{@render icon('peak', 11)}<input type="range" min="0" max="100" value="0" aria-label="Timeline zoom" />{@render icon('peaks', 15)}</div>
    </footer>
  </section>
</div>

<style>
  :global(body) { background: #161616; }
  .app {
    height: 100vh; min-height: 1000px; display: grid; grid-template-rows: 23px 20px 27px minmax(0, 880fr) minmax(0, 490fr);
    background: #161616; color: #a2a2a2; font: 11px/14px 'Open Sans', 'Noto Sans', sans-serif; overflow: hidden;
  }
  .app :global(*) { box-sizing: border-box; }
  button, input, select { font: inherit; color: inherit; background: none; border: 0; padding: 0; margin: 0; min-width: 0; outline: 0; }
  a { color: #3e8cdb; text-decoration: none; }
  em { font: italic 13px/14px 'Liberation Serif', serif; color: #b4b4b4; }
  .icon { flex: none; display: block; }
  .blue { color: #3e8cdb; }
  .plain { display: grid; place-items: center; color: #b0b0b0; }

  .titlebar { display: flex; align-items: center; gap: 6px; padding-left: 2px; background: #f3f3f3; color: #838383; font: 12px/16px Roboto, sans-serif; }
  .logo { width: 16px; height: 15px; border-radius: 3px; background: #00005b; color: #a9a4ff; font: bold 9px/15px 'Open Sans', sans-serif; text-align: center; }
  .doc { flex: 1; }
  .winbtns { display: flex; }
  .winbtns button { width: 46px; height: 20px; display: grid; place-items: center; }
  .winbtns button:last-child { width: 48px; }
  .menubar { display: flex; gap: 15px; padding: 0 7px; background: #fff; border-bottom: 2px solid #ededed; color: #5c5c5c; font: 12px/18px Roboto, sans-serif; }

  .toolbar { display: flex; align-items: center; background: #232323; border-bottom: 2px solid #161616; padding: 1px 6px 0 12px; color: #8f8f8f; }
  .tool { position: relative; flex: none; width: 25px; height: 23px; display: grid; place-items: center; color: #b4b4b4; }
  .tool.on { background: #161616; color: #2f8ae8; border: 1px solid #101010; border-radius: 2px; }
  .tool.dim { color: #484848; }
  .tool.dimblue { color: #1f4d7c; background: #1c1c1c; border-radius: 2px; }
  .tool.more::after { content: ''; position: absolute; right: 0; bottom: 0; border: 2px solid; border-color: transparent currentColor currentColor transparent; }
  .sep { flex: none; width: 7px; height: 20px; display: grid; justify-content: center; }
  .sep::before { content: ''; width: 1px; background: #151515; }
  .sep.wide { width: 41px; }
  .sep.mid { width: 13px; }
  .snap { margin-right: 10px; }
  .filllabel { margin-left: 2px; }
  .swatch { width: 24px; height: 18px; margin: 0 12px 0 2px; border: 1px solid #ddd; }
  .fill { background: red; }
  .ring { background: #232323; border: 4px solid #fff; outline: 1px solid #444; outline-offset: -5px; }
  .width { width: 11px; margin-left: -2px; }
  .add { margin-left: 28px; margin-right: 4px; }
  .workspaces { margin-left: auto; display: flex; align-items: center; border-left: 1px solid #151515; height: 23px; padding-left: 23px; gap: 45px; }
  .workspaces button { display: flex; align-items: center; gap: 13px; }
  .workspaces .current { color: #3e8cdb; }
  .workspaces .current + button { margin-left: -23px; }
  .workspaces .more-ws { margin-left: -7px; color: #c4c4c4; }
  .gear { margin: 0 11px 0 14px; }
  .helpsearch { display: flex; align-items: center; gap: 10px; width: 194px; height: 18px; padding: 0 6px; background: #161616; border: 1px solid #303030; border-radius: 2px; color: #b0b0b0; }
  .helpsearch input::placeholder { color: #b0b0b0; opacity: 1; }

  .workspace { display: grid; grid-template-columns: 318px minmax(0, 1fr) 205px; gap: 5px; padding: 0 2px 4px; min-height: 0; }
  .panel { background: #232323; min-width: 0; min-height: 0; }
  .tabs { display: flex; height: 26px; color: #8a8a8a; }
  .tab { display: flex; align-items: center; gap: 9px; color: #c4c4c4; padding-top: 2px; white-space: nowrap; }
  .tab b { font-weight: 400; color: #3e8cdb; }
  .tab.active { border-bottom: 2px solid #b8b8b8; }
  .chip { display: block; width: 10px; height: 10px; }
  .blue-chip { background: #6b7ee0; }
  .sand-chip { background: #a89778; }
  .tabbtn { padding-top: 2px; }

  .fxcontrols .tabs { padding: 0; }
  .cut { width: 56px; padding: 7px 0 0; }
  .overflow { margin-left: auto; color: #c4c4c4; }
  .path { padding: 5px 5px 2px; height: 22px; border-bottom: 1px solid #0c0c0c; }
  .proplist { width: 301px; }
  .prop { display: grid; grid-template-columns: 176px 1fr; height: 17px; background: #262626; border-bottom: 1px solid #202020; line-height: 16px; }
  .prop.head { background: #212121; color: #b0b0b0; }
  .prop.tall { height: 57px; }
  .prop.keyed { background: #2a2720; }
  .dimmed { color: #484848; }
  .dimmed .blue { color: #484848; }
  .plabel { display: flex; align-items: center; height: 16px; gap: 2px; }
  .head .plabel { padding-left: 5px; gap: 5px; }
  .head .plabel span { margin-left: 2px; }
  .head em { font-size: 15px; }
  .twirl { width: 30px; padding-left: 20px; }
  .watch { width: 17px; display: grid; place-items: center; color: #a2a2a2; }
  .dimmed .watch { color: #484848; }
  .watch.live { color: #3e8cdb; }
  .pvalue { white-space: nowrap; }
  .target { float: left; width: 22px; height: 15px; margin: 0 5px 0 0; display: grid; place-items: center; border: 1px solid #707070; color: #b0b0b0; }
  .target.picked { background: #8e8e8e; color: #eee; }
  .comma { margin-left: 2px; }
  .angle { display: block; }
  .dial { display: block; margin-top: 1px; }
  .pvalue .dropdown { width: 120px; height: 15px; }

  .check { display: flex; align-items: center; gap: 4px; white-space: nowrap; }
  .check input { appearance: none; flex: none; width: 14px; height: 14px; border: 2px solid #8a8a8a; border-radius: 2px; display: grid; place-items: center; }
  .check input:checked { background: #8a8a8a; }
  .check input:checked::before { content: ''; width: 4px; height: 8px; border: solid #232323; border-width: 0 2px 2px 0; transform: rotate(40deg) translate(-1px, -1px); }
  .check.small { height: 16px; gap: 5px; }
  .check.small input { width: 12px; height: 12px; }

  .dropdown { display: grid; grid-template-columns: 1fr 17px; align-items: center; min-width: 0; height: 100%; background: #1c1c1c; border: 1px solid #303030; border-radius: 2px; color: #b8b8b8; }
  .dropdown select { grid-area: 1 / 1 / 2 / 3; appearance: none; width: 100%; height: 100%; padding: 0 15px 0 6px; text-overflow: ellipsis; }
  .dropdown option { background: #1c1c1c; }
  .dropdown .icon { grid-area: 1 / 2; pointer-events: none; justify-self: center; color: #9a9a9a; }

  .comp { display: flex; flex-direction: column; }
  .comptab { padding-left: 10px; }
  .crumbs { display: flex; align-items: center; gap: 11px; height: 26px; padding: 0 19px; border-bottom: 1px solid #0c0c0c; }
  .crumb { display: flex; align-items: center; gap: 11px; height: 17px; padding: 0 2px 0 9px; background: #171717; border: 1px solid #141414; border-radius: 2px; color: #3e8cdb; }
  .crumb .icon { transform: scaleX(-1); }
  .viewer { flex: 1; min-height: 0; display: grid; grid-template: 17px minmax(0, 1fr) / 16px minmax(0, 1fr); padding-bottom: 4px; }
  .corner { border: solid #c4c4c4; border-width: 0 1px 1px 0; background: linear-gradient(#aaa, #aaa) 0 11px / 100% 1px no-repeat, linear-gradient(#aaa, #aaa) 9px 0 / 1px 100% no-repeat, #000; }
  .hruler, .vruler { position: relative; overflow: hidden; font-size: 9px; line-height: 10px; color: #b0b0b0; background-color: #000; }
  .hruler { background-image: linear-gradient(90deg, #aaa 1px, transparent 1px), linear-gradient(90deg, #8a8a8a 1px, transparent 1px), linear-gradient(#bbb, #bbb); background-size: 50px 17px, 5px 5px, 50px 1px; background-position-y: 0, 11px, 15px; background-repeat: repeat-x; border-top: 1px solid #555; }
  .hruler span { position: absolute; top: 0; }
  .vruler { background-image: linear-gradient(#aaa 1px, transparent 1px), linear-gradient(#8a8a8a 1px, transparent 1px), linear-gradient(#bbb, #bbb); background-size: 16px 50px, 5px 5px, 1px 50px; background-position-x: 0, 11px, 15px; background-repeat: repeat-y; }
  .vruler span { position: absolute; left: 2px; width: 6px; word-break: break-all; line-height: 8px; padding-top: 2px; }
  .stage { position: relative; overflow: hidden; }
  .frame { position: absolute; }
  .magazin { font: bold 62px 'Liberation Sans', Arial, sans-serif; fill: #e9e8e8; stroke: #e9e8e8; stroke-width: 3px; }
  .viewbar { display: flex; align-items: center; height: 23px; padding-left: 5px; border-top: 1px solid #171717; }
  .zoomsel { width: 69px; height: 19px; }
  .ressel { width: 86px; height: 19px; }
  .vsep { width: 11px; height: 14px; display: grid; justify-content: center; }
  .vsep::before { content: ''; width: 2px; background: #1a1a1a; }
  .vb { width: 22px; height: 20px; display: grid; place-items: center; color: #b0b0b0; }
  .vb.on { background: #171717; }
  .vb.off { color: #484848; }
  .expo { width: 31px; padding-left: 2px; }
  .timebox { width: 70px; height: 19px; border: 1px solid #303030; border-radius: 2px; }

  .side { display: grid; grid-template-rows: 142px 350px minmax(0, 1fr); gap: 4px; min-height: 0; }
  .side .tabs { padding: 0 3px 0 11px; }
  .side .tab { padding-left: 2px; gap: 11px; }
  .info .tabbtn { margin-left: 22px; }
  .readout { display: flex; margin: 7px 8px 0 6px; padding: 0 0 9px 2px; border-bottom: 2px solid #303030; height: 60px; }
  .black { width: 20px; height: 20px; margin-top: 12px; background: #000; }
  .rgba { width: 74px; padding-left: 6px; display: grid; grid-auto-rows: 13px; border-right: 2px solid #303030; white-space: nowrap; }
  .xy { position: relative; padding-left: 22px; display: grid; grid-auto-rows: 13px; }
  .cross { position: absolute; left: 10px; top: 22px; }
  .info p { margin: 3px 8px; white-space: nowrap; }

  .preview { padding-right: 4px; }
  .transport { display: flex; justify-content: center; gap: 12px; height: 32px; margin-left: 6px; border-bottom: 2px solid #303030; padding: 1px 6px 0 0; }
  .transport button { width: 12px; }
  .cap { display: block; padding: 5px 0 4px 7px; height: 23px; }
  .line { display: flex; height: 18px; padding-left: 6px; }
  .line .dropdown { flex: 1; }
  .ico { width: 26px; }
  .include { height: 28px; align-items: center; padding-left: 7px; }
  .include > span:first-child { flex: 1; }
  .tg { width: 22px; height: 20px; margin-left: 2px; display: grid; place-items: center; }
  .tg.on { background: #171717; border: 1px solid #2c2c2c; border-radius: 2px; color: #2f8ae8; }
  .isep { width: 2px; height: 18px; margin-left: 2px; background: #303030; }
  .pad { padding-left: 6px; height: 16px; }
  .preview .pad + .cap { padding-top: 7px; height: 25px; }
  .line + .cap { height: 22px; padding-top: 5px; }
  .trio { display: grid; grid-template: 21px 18px / 65px 42px 73px; column-gap: 5px; padding-left: 6px; margin-bottom: 4px; }
  .trio label { padding-top: 4px; }
  .split .dropdown { background: linear-gradient(#303030, #303030) calc(100% - 17px) 0 / 1px 100% no-repeat, #171717; }
  .stop { margin: 3px 0 0 6px; border-top: 2px solid #303030; }
  .stop .cap { padding-left: 1px; height: 22px; }
  .stop .check { height: 18px; }

  .effects { display: flex; flex-direction: column; }
  .effects .tabs { flex: none; }
  .clipped { width: 40px; margin-left: 10px; padding-left: 11px; white-space: nowrap; border-right: 1px solid #333; text-align: left; }
  .searchbox { display: flex; align-items: center; height: 19px; padding: 0 7px; background: #161616; border: 1px solid #303030; border-radius: 2px; color: #b0b0b0; }
  .searchbox input { flex: 1; }
  .effects .searchbox { margin: 5px 5px 2px; flex: none; }
  .caret { border: 3px solid transparent; border-top-color: #b0b0b0; margin-top: 6px; }
  .fxwrap { display: flex; height: 307px; border-top: 1px solid #0c0c0c; border-bottom: 1px solid #0c0c0c; }
  ul { list-style: none; margin: 0; padding: 0 0 0 2px; flex: 1; overflow: hidden; }
  li { display: flex; align-items: center; gap: 5px; height: 17px; padding-left: 2px; background: #262626; border-bottom: 1px solid #1f1f1f; }
  .scroll { width: 17px; padding: 1px; background: #1c1c1c; }
  .scroll i { display: block; height: 227px; border-radius: 8px; background: #303030; }
  .fxfoot { display: flex; justify-content: flex-end; padding: 3px 6px 0; width: 188px; border-right: 1px solid #0c0c0c; flex: 1; color: #b8b8b8; }

  .timeline { display: flex; flex-direction: column; margin: 0 2px; }
  .timeline .tabs { flex: none; height: 27px; }
  .tl { margin-left: 9px; gap: 10px; }
  .other { display: flex; align-items: center; gap: 12px; margin-left: 36px; }
  .tlbody { flex: 1; display: grid; grid-template-columns: 895px minmax(0, 1fr) 17px; min-height: 0; }
  .outline { border-right: 1px solid #0c0c0c; }
  .tlhead { display: flex; height: 36px; }
  .clock { width: 105px; padding-left: 10px; }
  .clock strong { display: block; margin: 4px 0 1px 5px; font-size: 15px; line-height: 15px; color: #2f8ae8; }
  .clock small { display: block; font-size: 11px; line-height: 14px; color: #23578d; white-space: nowrap; }
  .tlhead .searchbox { width: 621px; height: 20px; margin-top: 8px; }
  .tlbtns { display: flex; flex: 1; align-items: center; gap: 11px; padding: 0 16px; }
  .flow { margin-right: 7px; }
  .graph { margin-left: auto; }

  table { width: 100%; table-layout: fixed; border-collapse: collapse; border-top: 1px solid #0c0c0c; }
  .c-av { width: 67px; } .c-label { width: 34px; } .c-num { width: 31px; } .c-name { width: 133px; } .c-sw { width: 121px; }
  .c-gap { width: 104px; } .c-mode { width: 104px; } .c-t { width: 17px; } .c-matte { width: 121px; } .c-inv { width: 30px; } .c-parent { width: 117px; }
  th, td { padding: 0; text-align: left; font-weight: 400; white-space: nowrap; overflow: hidden; }
  th { height: 19px; font-size: 9px; border-bottom: 1px solid #0c0c0c; }
  td { height: 17px; border-bottom: 1px solid #222; background: #2d2d2d; line-height: 14px; }
  .sel td { background: #474747; }
  .sub td { background: #262626; }
  .bar { background: linear-gradient(#0c0c0c, #0c0c0c) 0 4px / 1px 11px no-repeat; }
  th.pad-s { padding-left: 6px; }
  .mid { text-align: center; }
  .num { padding-left: 6px; }
  .cells { display: flex; gap: 2px; height: 15px; padding-left: 2px; align-items: center; }
  .av { padding-left: 4px; }
  .inv { padding-left: 0; }
  .cells span { flex: none; width: 13px; height: 15px; display: grid; place-items: center; color: #b0b0b0; }
  .well { background: #272727; }
  .clear { background: none; }
  .sel .well { background: #3e3e3e; }
  .cells .faint { color: #777; }
  .tagcell { padding-left: 14px; color: #b0b0b0; }
  .labelcell { display: flex; align-items: center; gap: 5px; padding-left: 4px; }
  .labelcell i { width: 12px; height: 12px; }
  .namecell { display: flex; align-items: center; height: 16px; padding-left: 1px; }
  .nicon { width: 17px; display: grid; place-items: center; color: #b0b0b0; }
  .lname { padding: 0 4px; line-height: 16px; }
  .sel .lname { background: #9c9c9c; color: #161616; width: 111px; margin-left: 1px; padding-left: 3px; }
  .selcell { display: flex; align-items: center; height: 15px; padding: 0 3px; }
  .selcell .dropdown { flex: 1; border: 0; border-radius: 0; }
  .selcell .dropdown select { padding: 0 12px 0 7px; }
  .whip { gap: 4px; padding: 0 2px; }
  .par { padding: 0 2px 0 4px; gap: 6px; }
  .subname { overflow: visible; }
  .subname div { display: flex; gap: 8px; align-items: center; margin-left: -12px; }
  .subwhip { padding-left: 17px; }

  .tracks { position: relative; display: flex; flex-direction: column; padding-top: 6px; background: #323232; overflow: hidden; margin-bottom: 1px; }
  .tracks::before { content: ''; position: absolute; inset: 0 0 auto; height: 56px; background: #232323; }
  .tracks::after { content: ''; position: absolute; inset: 56px 0 0; border: solid rgba(24, 24, 24, .55); border-width: 0 7px; }
  .navigator, .workarea { position: relative; display: flex; justify-content: space-between; margin-right: 1px; border: solid #0c0c0c; border-width: 1px 0; background: #666; }
  .navigator { height: 11px; }
  .workarea { height: 16px; background: #5e5e5e; }
  .navigator i, .navigator b, .workarea i, .workarea b { width: 7px; background: #2f8ae8; border-right: 1px solid #0c0c0c; border-radius: 6px 0 0 6px; }
  .navigator b, .workarea b { border-radius: 0 6px 6px 0; border-width: 0 0 0 1px; border-left: 1px solid #0c0c0c; }
  .scale { position: relative; height: 100%; margin: 0 7px; }
  .timeruler { position: relative; height: 19px; }
  .timeruler span { position: absolute; top: 0; height: 19px; transform: translateX(-50%); font-size: 10px; line-height: 14px; display: grid; justify-items: center; }
  .timeruler span::after { content: ''; width: 1px; height: 5px; background: #8a8a8a; }
  .cache { position: relative; height: 4px; border-bottom: 1px solid #0c0c0c; }
  .cache .scale { background: #24b02e; }
  .cache i { position: absolute; inset: 0 auto; background: #1a1fa0; }
  .lanes { position: relative; }
  .lane { height: 17px; background: #3b3b3b; border-bottom: 1px solid #212121; }
  .lane.sel { background: #505050; }
  .sublane { background: #353535; }
  .clip { position: absolute; top: 0; height: 16px; border-top: 1px solid rgba(255, 255, 255, .12); }
  .violet { background: #525c8e; }
  .sand { background: #736959; }
  .sanddim { background: #4b4740; }
  .teal { background: #74827f; }
  .picked { background: linear-gradient(#7482d8, #4660c4); border: solid #b8c0e8; border-width: 1px 0 0 1px; }
  .cut-in::before, .cut-out::after { content: ''; position: absolute; top: 0; border: 3px solid #3a3a36; border-bottom-color: transparent; }
  .cut-in::before { left: 0; border-right-color: transparent; }
  .cut-out::after { right: 0; border-left-color: transparent; }
  .target.picked { border: 0; }
  .playhead { position: absolute; inset: 21px 0 0; }
  .cti { position: absolute; top: 0; bottom: 0; width: 12px; margin-left: -6px; background: linear-gradient(#2f7fc4, #2f7fc4) 50% 14px / 1px 100% no-repeat; }
  .cti svg { display: block; }
  .cti .ibeam { position: absolute; left: 3px; top: 123px; }
  .strip { display: flex; flex-direction: column; align-items: center; gap: 7px; padding-top: 38px; color: #b0b0b0; }

  footer { display: flex; align-items: center; height: 19px; padding-left: 7px; border-bottom: 2px solid #303030; background: linear-gradient(#0c0c0c, #0c0c0c) 0 0 / 1002px 1px no-repeat; gap: 7px; flex: none; }
  footer .plain { width: 12px; }
  footer .lit { color: #2f8ae8; }
  .render { width: 127px; margin-left: 22px; white-space: nowrap; }
  .render b { color: #5fd0a8; }
  .zoomer { display: flex; align-items: center; gap: 11px; margin-left: 660px; color: #b0b0b0; }
  .zoomer input { appearance: none; width: 50px; height: 2px; background: #484848; }
  .zoomer input::-webkit-slider-thumb { appearance: none; width: 10px; height: 10px; border: 2px solid #a0a0a0; border-radius: 50%; background: #232323; }
</style>
